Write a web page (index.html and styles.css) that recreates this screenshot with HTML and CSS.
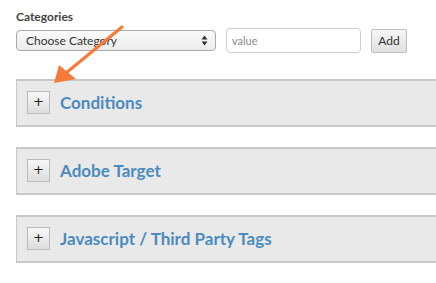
FILE: index.html
```html
<!DOCTYPE html>
<html lang="en">
<head>
  <meta charset="UTF-8">
  <title>Rule editor</title>
  <link rel="stylesheet" href="styles.css">
</head>
<body>
  <!-- Categorias -->
  <div class="categories">
    <label class="cat-label">Categories</label>
    <div class="cat-row">
      <div class="select">
        <span>Choose Category</span>
        <svg class="updown" width="7" height="11" viewBox="0 0 7 11"><path d="M3.5 0.5 L6.5 4.5 H0.5 Z M3.5 10.5 L6.5 6.5 H0.5 Z" fill="#333"/></svg>
      </div>
      <input class="value" type="text" placeholder="value">
      <button class="add-btn">Add</button>
    </div>
  </div>

  <!-- Secoes -->
  <div class="sections">
    <div class="section">
      <button class="toggle">+</button>
      <h2>Conditions</h2>
    </div>
    <div class="section">
      <button class="toggle">+</button>
      <h2>Adobe Target</h2>
    </div>
    <div class="section">
      <button class="toggle">+</button>
      <h2>Javascript / Third Party Tags</h2>
    </div>
  </div>

  <!-- Seta de destaque -->
  <svg class="arrow" width="436" height="283" viewBox="0 0 436 283">
    <line x1="122" y1="27" x2="66" y2="73" stroke="#f47b3a" stroke-width="3.2" stroke-linecap="round"/>
    <polygon points="54,83 59,65 76,79" fill="#f47b3a"/>
  </svg>
</body>
</html>
```

FILE: styles.css
```css
* { margin:0; padding:0; box-sizing:border-box; }
html, body {
  width:100%; height:100%;
  background:#fff;
  overflow:hidden;
  font-family:Lato, 'Open Sans', sans-serif;
}
body { position:relative; padding:10px 0 0 16px; }

/* Categorias */
.cat-label {
  display:block;
  font-size:12px; font-weight:700; color:#444;
  line-height:14px;
  margin-bottom:4px;
}
.cat-row { display:flex; align-items:center; gap:10px; }
.select {
  width:200px; height:21px;
  display:flex; align-items:center; justify-content:space-between;
  padding:0 7px 0 9px;
  border:1px solid #a9a9a9; border-radius:4px;
  background:linear-gradient(#fbfbfb,#ececec);
  font-size:12px; color:#333;
}
.value {
  width:135px; height:25px;
  border:1px solid #cfcfcf; border-radius:4px;
  padding:0 5px;
  font-family:inherit; font-size:11px; color:#333;
}
.value::placeholder { color:#8a8a8a; }
.add-btn {
  width:36px; height:24px;
  border:1px solid #bdbdbd; border-radius:2px;
  background:linear-gradient(#f6f6f6,#e0e0e0);
  font-family:inherit; font-size:12px; color:#333;
}

/* Secoes */
.sections {
  width:100%;
  margin-top:26px;
  display:flex; flex-direction:column; gap:20px;
}
.section {
  height:48px;
  display:flex; align-items:center;
  padding:0 0 2px 10px;
  background:#e9e9e9;
  border:solid #c9c9c9;
  border-width:2px 0 2px 1px;
}
.toggle {
  width:23px; height:23px;
  border:1px solid #bcbcbc;
  background:linear-gradient(#f7f7f7,#dcdcdc);
  font-family:'DejaVu Sans', sans-serif; font-size:13px; color:#222;
  line-height:20px;
}
.section h2 {
  margin-left:10px;
  font-size:17px; font-weight:700; color:#4b8bc0;
}

/* Seta */
.arrow { position:absolute; top:0; left:0; pointer-events:none; }
```
